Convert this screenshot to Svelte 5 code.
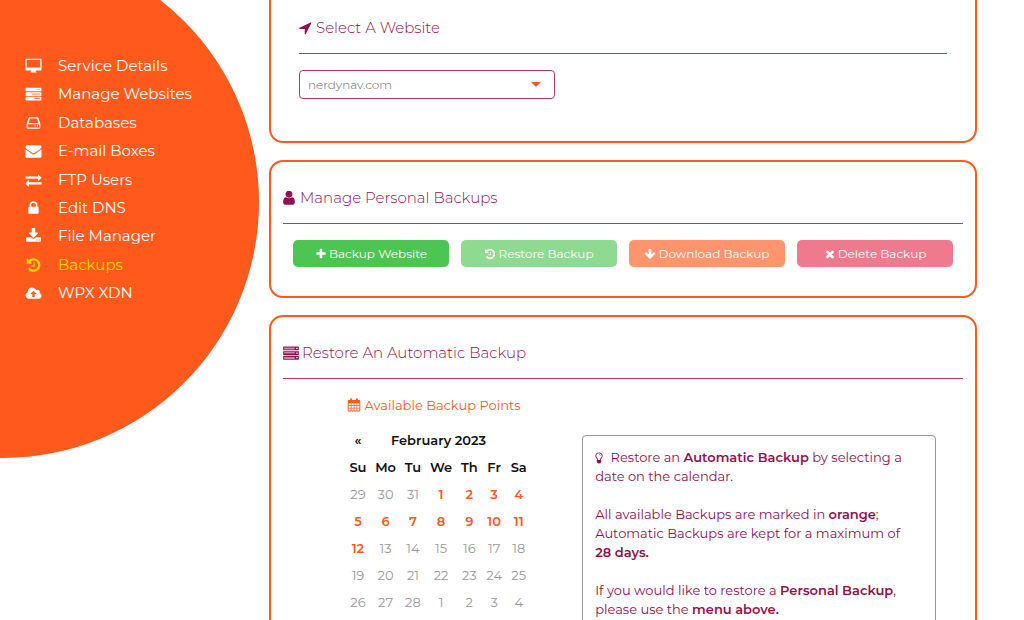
<script lang="ts">
	interface NavItem {
		label: string;
		icon: string;
		active?: boolean;
	}

	const nav: NavItem[] = [
		{ label: 'Service Details', icon: 'desktop' },
		{ label: 'Manage Websites', icon: 'server' },
		{ label: 'Databases', icon: 'hdd' },
		{ label: 'E-mail Boxes', icon: 'envelope' },
		{ label: 'FTP Users', icon: 'exchange' },
		{ label: 'Edit DNS', icon: 'lock' },
		{ label: 'File Manager', icon: 'download' },
		{ label: 'Backups', icon: 'history', active: true },
		{ label: 'WPX XDN', icon: 'cloud' }
	];

	const icons: Record<string, string> = {
		desktop:
			'M110 90h1572q110 0 110 110v1080q0 110-110 110h-540v80q100 30 100 110v40h-692v-40q0-80 100-110v-80h-540q-110 0-110-110v-1080q0-110 110-110zm50 130q-30 0-30 30v780q0 30 30 30h1472q30 0 30-30v-780q0-30-30-30z',
		server:
			'M60 190h1672q50 0 50 50v310q0 50-50 50h-1672q-50 0-50-50v-310q0-50 50-50zm1190 170v70h360v-70zM60 700h1672q50 0 50 50v310q0 50-50 50h-1672q-50 0-50-50v-310q0-50 50-50zm660 170v70h890v-70zM60 1210h1672q50 0 50 50v310q0 50-50 50h-1672q-50 0-50-50v-310q0-50 50-50zm960 170v70h590v-70z',
		serverOutline:
			'M20 170h1752v430h-1752zm110 130v50h1180v-50zm0 120v50h1180v-50zM1490 310v140h150v-140zM20 690h1752v430h-1752zm110 130v50h1180v-50zm0 120v50h1180v-50zM1490 830v140h150v-140zM20 1210h1752v430h-1752zm110 130v50h1180v-50zm0 120v50h1180v-50zM1490 1350v140h150v-140z',
		hdd: 'M480 256h832q110 0 150 110l190 580q12 40 12 90v370q0 130-130 130h-1276q-130 0-130-130v-370q0-50 12-90l190-580q40-110 150-110zm20 130l-160 500h1112l-160-500zm-240 640v370h1272v-370zM1010 1150h130v130h-130zM1270 1150h130v130h-130z',
		envelope:
			'M1792 710v794q0 66-47 113t-113 47h-1472q-66 0-113-47t-47-113v-794q44 49 101 87 362 246 497 345 57 42 92.5 65.5t94.5 48 110 24.5h2q51 0 110-24.5t94.5-48 92.5-65.5q170-123 498-345 57-39 100-87zm0-294q0 79-49 151t-122 123q-376 261-468 325-10 7-42.5 31t-54 38.5-52 32.5-57.5 27-50 9h-2q-23 0-50-9t-57.5-27-52-32.5-54-38.5-42.5-31q-91-64-262-182.5t-205-142.5q-62-42-117-115.5t-55-136.5q0-78 41.5-130t118.5-52h1472q65 0 112.5 47t47.5 113z',
		exchange:
			'M1792 1184v192q0 13-9.5 22.5t-22.5 9.5h-1376v192q0 13-9.5 22.5t-22.5 9.5q-12 0-24-10l-319-320q-9-9-9-22 0-14 9-23l320-320q9-9 23-9 13 0 22.5 9.5t9.5 22.5v192h1376q13 0 22.5 9.5t9.5 22.5zm0-544q0 14-9 23l-320 320q-9 9-23 9-13 0-22.5-9.5t-9.5-22.5v-192h-1376q-13 0-22.5-9.5t-9.5-22.5v-192q0-13 9.5-22.5t22.5-9.5h1376v-192q0-14 9-23t23-9q12 0 24 10l319 319q9 9 9 23z',
		lock: 'M640 768h512v-192q0-106-75-181t-181-75-181 75-75 181v192zm832 96v576q0 40-28 68t-68 28h-960q-40 0-68-28t-28-68v-576q0-40 28-68t68-28h32v-192q0-184 132-316t316-132 316 132 132 316v192h32q40 0 68 28t28 68z',
		download:
			'M1344 1344q0-26-19-45t-45-19-45 19-19 45 19 45 45 19 45-19 19-45zm256 0q0-26-19-45t-45-19-45 19-19 45 19 45 45 19 45-19 19-45zm128-224v320q0 40-28 68t-68 28h-1472q-40 0-68-28t-28-68v-320q0-40 28-68t68-28h465l135 136q58 56 136 56t136-56l136-136h464q40 0 68 28t28 68zm-325-569q17 41-14 70l-448 448q-18 19-45 19t-45-19l-448-448q-31-29-14-70 17-39 59-39h256v-448q0-26 19-45t45-19h256q26 0 45 19t19 45v448h256q42 0 59 39z',
		history:
			'M1664 896q0 156-61 298t-164 245-245 164-298 61q-172 0-327-72.5t-264-204.5q-7-10-6.5-22.5t8.5-20.5l137-138q10-9 25-9 16 2 23 12 73 95 179 147t225 52q104 0 198.5-40.5t163.5-109.5 109.5-163.5 40.5-198.5-40.5-198.5-109.5-163.5-163.5-109.5-198.5-40.5q-98 0-188 35.5t-160 101.5l137 138q31 30 14 69-17 40-59 40h-448q-26 0-45-19t-19-45v-448q0-42 40-59 39-17 69 14l130 129q107-101 244.5-156.5t284.5-55.5q156 0 298 61t245 164 164 245 61 298zm-640-288v448q0 14-9 23t-23 9h-320q-14 0-23-9t-9-23v-64q0-14 9-23t23-9h224v-352q0-14 9-23t23-9h64q14 0 23 9t9 23z',
		cloud:
			'M390 1536q-160 0-275-112t-115-270q0-120 66-216t176-140q-2-20-2-40 0-200 142-342t342-142q152 0 272 84t176 220q70-60 164-60 110 0 186 76t76 186q0 76-42 140 104 24 170 108t66 192q0 130-92 223t-222 93zM896 640l-350 370h220v320h260v-320h220z',
		arrow:
			'M1593 349l-640 1280q-17 35-57 35-5 0-15-2-22-5-35.5-22.5t-13.5-39.5v-576h-576q-22 0-39.5-13.5t-22.5-35.5 4-42 29-30l1280-640q13-7 29-7 27 0 45 19 15 14 18.5 34.5t-6.5 39.5z',
		user: 'M1536 1399q0 109-62.5 187t-150.5 78h-854q-88 0-150.5-78t-62.5-187q0-85 8.5-160.5t31.5-152 58.5-131 94-89 134.5-34.5q131 128 313 128t313-128q76 0 134.5 34.5t94 89 58.5 131 31.5 152 8.5 160.5zm-256-887q0 159-112.5 271.5t-271.5 112.5-271.5-112.5-112.5-271.5 112.5-271.5 271.5-112.5 271.5 112.5 112.5 271.5z',
		plus: 'M1600 736v192q0 40-28 68t-68 28h-416v416q0 40-28 68t-68 28h-192q-40 0-68-28t-28-68v-416h-416q-40 0-68-28t-28-68v-192q0-40 28-68t68-28h416v-416q0-40 28-68t68-28h192q40 0 68 28t28 68v416h416q40 0 68 28t28 68z',
		down: 'M1675 832q0 53-37 90l-651 652q-39 37-91 37-53 0-90-37l-651-652q-38-36-38-90 0-53 38-91l74-75q39-37 91-37 53 0 90 37l294 294v-704q0-52 38-90t90-38h128q52 0 90 38t38 90v704l294-294q37-37 90-37 52 0 91 37l75 75q37 39 37 91z',
		times:
			'M1490 1322q0 40-28 68l-136 136q-28 28-68 28t-68-28l-294-294-294 294q-28 28-68 28t-68-28l-136-136q-28-28-28-68t28-68l294-294-294-294q-28-28-28-68t28-68l136-136q28-28 68-28t68 28l294 294 294-294q28-28 68-28t68 28l136 136q28 28 28 68t-28 68l-294 294 294 294q28 28 28 68z',
		calendar:
			'M200 250h200v-90q0-140 130-140t130 140v90h472v-90q0-140 130-140t130 140v90h200q110 0 110 110v1250q0 110-110 110h-1392q-110 0-110-110v-1250q0-110 110-110zm10 420v240h270v-240zm360 0v240h280v-240zm370 0v240h280v-240zm370 0v240h270v-240zM210 1000v240h270v-240zm360 0v240h280v-240zm370 0v240h280v-240zm370 0v240h270v-240zM210 1330v280h270v-280zm360 0v280h280v-280zm370 0v280h280v-280zm370 0v280h270v-280z',
		bulb: 'M896 60q220 0 380 150t160 370q0 160-100 290-150 200-160 330 60 40 60 100 0 50-30 80 30 40 30 80 0 80-80 110-30 150-260 150t-260-150q-80-30-80-110 0-40 30-80-30-30-30-80 0-60 60-100-10-130-160-330-100-130-100-290 0-220 160-370t380-150zm0 130q-170 0-290 112t-120 278q0 120 74 212 170 210 184 388h304q14-178 184-388 74-92 74-212 0-166-120-278t-290-112zm0 150q100 0 170 62t70 148h-90q0-50-45-85t-105-35z'
	};

	const actions = [
		{ label: 'Backup Website', icon: 'plus', tone: 'green', disabled: false },
		{ label: 'Restore Backup', icon: 'history', tone: 'light-green', disabled: true },
		{ label: 'Download Backup', icon: 'down', tone: 'orange', disabled: true },
		{ label: 'Delete Backup', icon: 'times', tone: 'red', disabled: true }
	];

	const weekdays = ['Su', 'Mo', 'Tu', 'We', 'Th', 'Fr', 'Sa'];

	// Sunday 29 January 2023 is the first visible day
	const weeks = Array.from({ length: 5 }, (_, w) =>
		Array.from({ length: 7 }, (_, d) => {
			const date = new Date(2023, 0, 29 + w * 7 + d);
			return {
				day: date.getDate(),
				available: date.getMonth() === 1 && date.getDate() <= 12
			};
		})
	);

	let website = $state('nerdynav.com');
</script>

{#snippet icon(name: string, box = '0 0 1792 1792')}
	<svg class="icon" viewBox={box} aria-hidden="true">
		<path fill-rule="evenodd" d={icons[name]} />
	</svg>
{/snippet}

<div class="page">
	<nav class="sidebar">
		<ul>
			{#each nav as item}
				<li>
					<a href="#{item.icon}" class:active={item.active}>
						{@render icon(item.icon)}
						{item.label}
					</a>
				</li>
			{/each}
		</ul>
	</nav>

	<main>
		<section class="card card-select">
			<h2>{@render icon('arrow', '160 100 1640 1640')}<label for="website">Select A Website</label></h2>
			<div class="select">
				<select id="website" bind:value={website}>
					<option>nerdynav.com</option>
				</select>
				<span class="caret"></span>
			</div>
		</section>

		<section class="card">
			<h2>{@render icon('user', '240 160 1536 1536')}Manage Personal Backups</h2>
			<div class="actions">
				{#each actions as action}
					<button class="action {action.tone}" disabled={action.disabled}>
						{@render icon(action.icon)}{action.label}
					</button>
				{/each}
			</div>
		</section>

		<section class="card">
			<h2 class="wide-icon">{@render icon('serverOutline')}Restore An Automatic Backup</h2>
			<div class="restore">
				<div class="points">
					<h3>{@render icon('calendar')}Available Backup Points</h3>
					<table>
						<thead>
							<tr>
								<th><button aria-label="Previous month">«</button></th>
								<th colspan="5">February 2023</th>
								<th></th>
							</tr>
							<tr>
								{#each weekdays as day}
									<th>{day}</th>
								{/each}
							</tr>
						</thead>
						<tbody>
							{#each weeks as week}
								<tr>
									{#each week as { day, available }}
										<td>
											{#if available}
												<button class="available">{day}</button>
											{:else}
												{day}
											{/if}
										</td>
									{/each}
								</tr>
							{/each}
						</tbody>
					</table>
				</div>

				<div class="info">
					<p>
						{@render icon('bulb', '300 0 1792 1792')} Restore an <strong>Automatic Backup</strong> by
						selecting a date on the calendar.
					</p>
					<p>
						All available Backups are marked in <strong>orange</strong>; Automatic Backups are kept for a
						maximum of <strong>28 days.</strong>
					</p>
					<p>
						If you would like to restore a <strong>Personal Backup</strong>, please use the
						<strong>menu above.</strong>
					</p>
				</div>
			</div>
		</section>
	</main>
</div>

<style>
	:global(body) {
		background: #fff;
		font-family: Montserrat, Inter, 'Open Sans', sans-serif;
	}

	.page {
		--orange: #ff5a1b;
		--plum: #930f50;
		display: flex;
		align-items: flex-start;
		height: 100vh;
		overflow: hidden;
		color: var(--plum);
	}

	.icon {
		width: 14px;
		height: 14px;
		flex: none;
		fill: currentColor;
	}

	button {
		font: inherit;
		color: inherit;
		border: 0;
		padding: 0;
		background: none;
		cursor: pointer;
	}

	/* the menu sits on the visible quarter of a large disc */
	.sidebar {
		box-sizing: border-box;
		flex: none;
		width: 512px;
		height: 512px;
		margin: -54px 10px 0 -253px;
		padding: 108px 0 0 278px;
		border-radius: 50%;
		background: var(--orange);
	}

	.sidebar ul {
		display: flex;
		flex-direction: column;
		justify-content: space-between;
		height: 251px;
		margin: 0;
		padding: 0;
		list-style: none;
	}

	.sidebar a {
		display: flex;
		align-items: center;
		gap: 16px;
		color: #fff;
		font-size: 15px;
		line-height: 24px;
		text-decoration: none;
	}

	.sidebar a.active {
		color: #f5d800;
	}

	.sidebar .icon {
		width: 17px;
		height: 16px;
	}

	main {
		flex: 1;
		min-width: 0;
		margin-right: 47px;
	}

	.card {
		margin-bottom: 17px;
		padding: 24px 12px 29px;
		border: 2px solid var(--orange);
		border-radius: 14px;
	}

	.card-select {
		margin-top: -20px;
		padding: 34px 28px 42px;
	}

	h2 {
		display: flex;
		align-items: center;
		gap: 3px;
		margin: 0 0 16px;
		padding-bottom: 13px;
		border-bottom: 1px solid #a83b70;
		font-size: 15px;
		font-weight: 300;
		line-height: 24px;
	}

	.wide-icon .icon {
		width: 16px;
		height: 16px;
	}

	.select {
		position: relative;
		max-width: 256px;
	}

	select {
		display: block;
		width: 100%;
		height: 29px;
		padding: 0 8px;
		appearance: none;
		border: 1px solid #a83b70;
		border-radius: 4px;
		background: #fff;
		color: #666;
		font: 300 12px Montserrat, Inter, 'Open Sans', sans-serif;
	}

	.caret {
		position: absolute;
		top: 12px;
		right: 14px;
		border: 5px solid transparent;
		border-top-color: var(--orange);
		border-bottom: 0;
		pointer-events: none;
	}

	.actions {
		display: grid;
		grid-template-columns: repeat(4, 1fr);
		gap: 12px;
		padding: 0 10px;
	}

	.action {
		display: flex;
		align-items: center;
		justify-content: center;
		gap: 2px;
		height: 27px;
		border-radius: 5px;
		color: #fff;
		font-size: 12px;
		white-space: nowrap;
	}

	.action .icon {
		width: 12px;
		height: 12px;
	}

	.green {
		background: #4dc552;
	}

	.light-green {
		background: #8eda90;
	}

	.orange {
		background: #ff946d;
	}

	.red {
		background: #ef7a8e;
	}

	.restore {
		display: grid;
		grid-template-columns: 44% 52%;
		padding-top: 1px;
	}

	.points {
		display: flex;
		flex-direction: column;
		align-items: center;
		padding-left: 11px;
	}

	h3 {
		display: flex;
		align-items: center;
		gap: 3px;
		margin: 0 8px 12px 0;
		color: var(--orange);
		font-size: 13px;
		font-weight: 400;
		line-height: 18px;
	}

	table {
		width: 186px;
		border-collapse: collapse;
		color: #999;
		font-size: 13px;
		text-align: center;
	}

	th,
	td {
		height: 27px;
		padding: 0 4px;
		font-weight: 400;
	}

	th {
		color: #111;
		font-weight: 600;
	}

	.available {
		color: var(--orange);
		font-weight: 600;
	}

	.info {
		margin-top: 39px;
		padding: 12px 24px 30px 12px;
		border: 1px solid #999;
		border-radius: 4px;
		font-size: 13px;
		font-weight: 400;
		line-height: 19px;
	}

	.info .icon {
		width: 12px;
		height: 12px;
		vertical-align: -2px;
	}

	p {
		margin: 0 0 19px;
	}

	strong {
		font-weight: 600;
	}
</style>
